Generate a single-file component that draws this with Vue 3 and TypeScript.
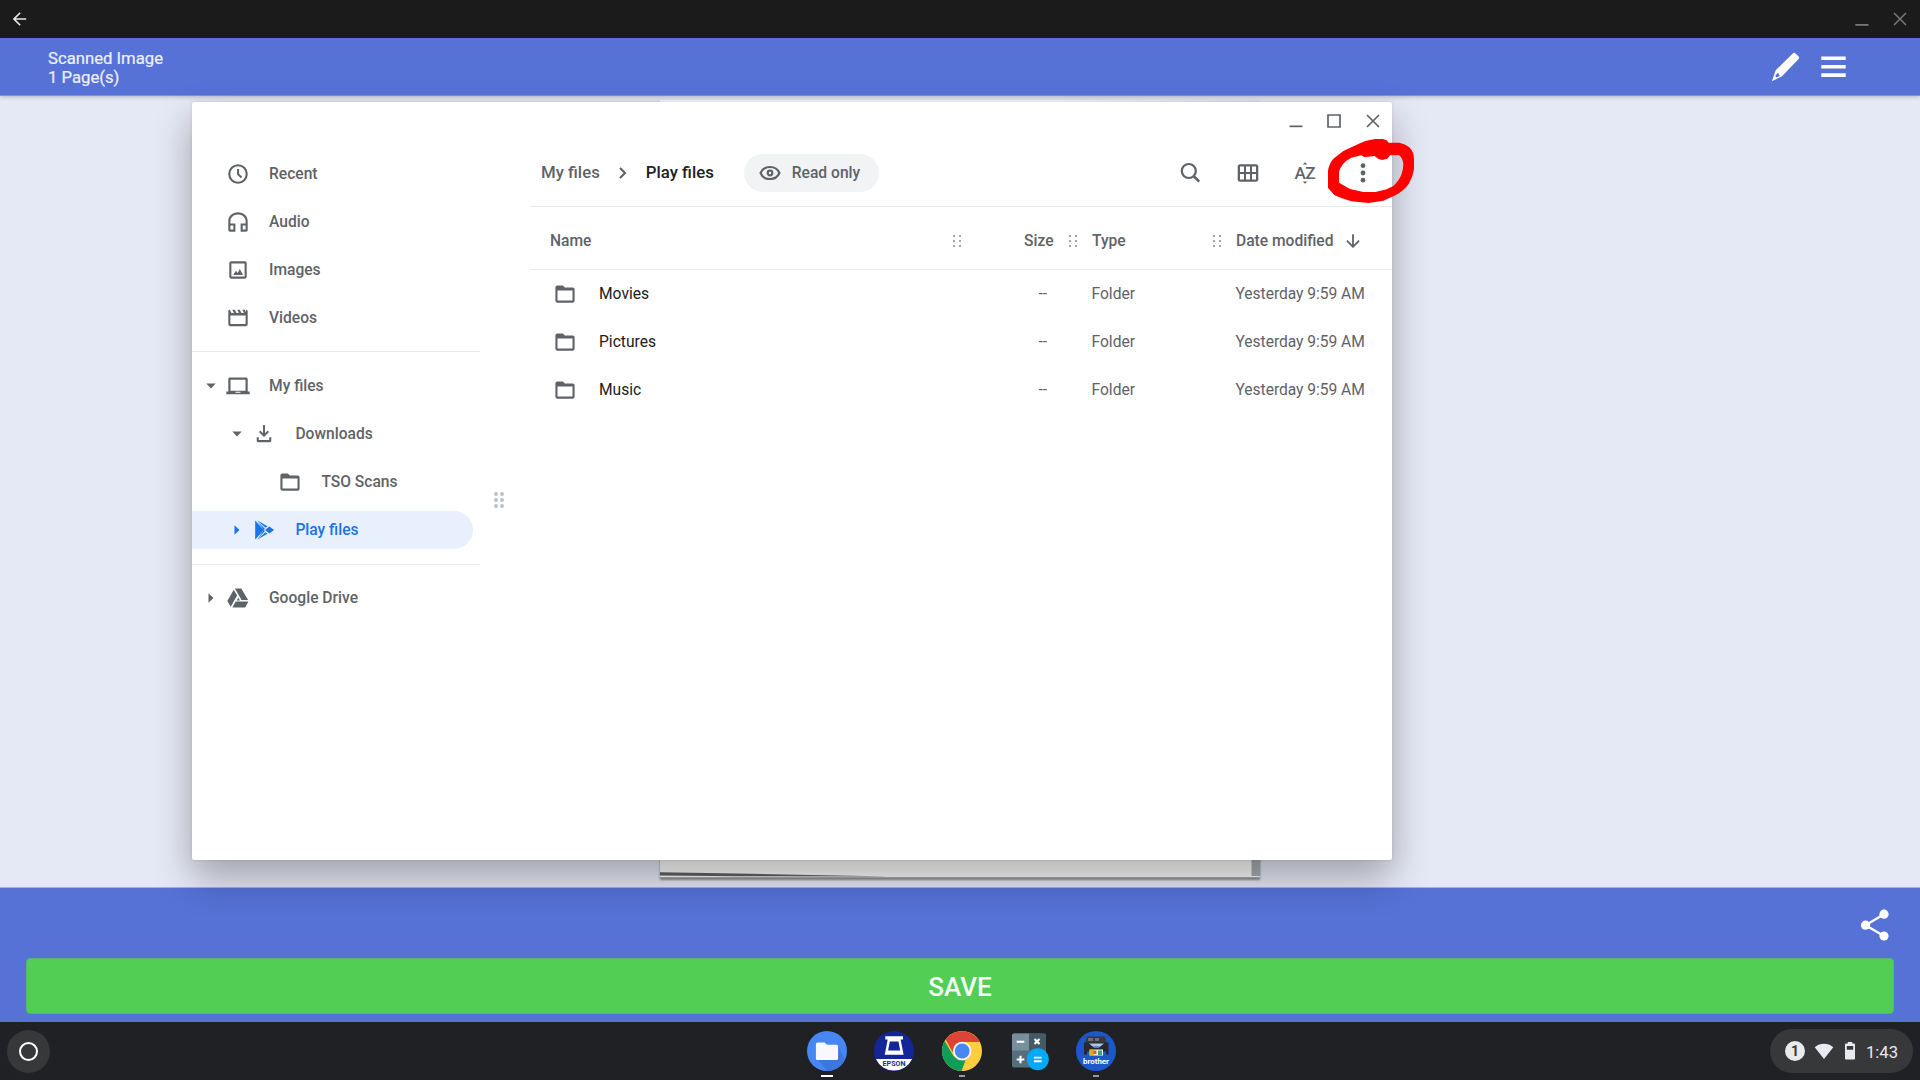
<script setup lang="ts">
interface NavItem {
  label: string
  icon: string
  level: number
  arrow?: 'down' | 'right'
  active?: boolean
}

const navGroups: NavItem[][] = [
  [
    { label: 'Recent', icon: 'clock', level: 0 },
    { label: 'Audio', icon: 'audio', level: 0 },
    { label: 'Images', icon: 'image', level: 0 },
    { label: 'Videos', icon: 'video', level: 0 },
  ],
  [
    { label: 'My files', icon: 'laptop', level: 0, arrow: 'down' },
    { label: 'Downloads', icon: 'download', level: 1, arrow: 'down' },
    { label: 'TSO Scans', icon: 'folder', level: 2 },
    { label: 'Play files', icon: 'play', level: 1, arrow: 'right', active: true },
  ],
  [{ label: 'Google Drive', icon: 'drive', level: 0, arrow: 'right' }],
]

const icons: Record<string, string> = {
  clock:
    'M12 2.2a9.8 9.8 0 1 0 0 19.6 9.8 9.8 0 0 0 0-19.6zm0 2.1a7.7 7.7 0 1 1 0 15.4 7.7 7.7 0 0 1 0-15.4zM11 7v5.6l3.8 3.6 1.3-1.5-3-2.9V7z',
  audio:
    'M2.3 20V11.2C2.3 6 6.500 2.300 12 2.300s9.700 3.700 9.700 8.900V20c0 1-.8 1.700-1.700 1.700h-5.400v-8.300h5V11.200c0-4-3.200-6.800-7.600-6.800s-7.600 2.800-7.600 6.800v2.200h5v8.300H4c-.9 0-1.700-.7-1.700-1.700zm2.100-4.500v4h2.900v-4zm12.300 0v4h2.900v-4z',
  image:
    'M5.200 3.300h13.600c1 0 1.900.9 1.900 1.900v13.600c0 1-.9 1.900-1.900 1.900H5.200c-1 0-1.900-.9-1.900-1.900V5.200c0-1 .9-1.900 1.900-1.900zm.2 2.100v13.200h13.200V5.400zM7.200 17l2.700-4.300 1.900 2.200 2-3.800L17 17z',
  video:
    'M2.300 5.200c0-1 .6-1.500 1.500-1.500L5.400 7h2.500L6.300 3.700h2.500L10.400 7h2.500l-1.600-3.300h2.500L15.400 7h2.500l-1.600-3.300h2.500L20 6.200V3.700c1 0 1.700.6 1.700 1.500v13.100c0 1-.8 1.900-1.900 1.900H4.200c-1 0-1.900-.9-1.900-1.900zm2.100 4.200v8.700h15.200V9.400z',
  laptop:
    'M3.900 3.600h16.200c.9 0 1.600.7 1.600 1.600v12.400h2v2.600H.3v-2.600h2V5.200c0-.9.7-1.600 1.600-1.600zm.6 2.100v11h15v-11zM9.500 17.700v1h5v-1z',
  download:
    'M11 3h2v8.200l2.600-2.600L17 10l-5 5-5-5 1.400-1.400 2.600 2.600zM4.700 15.200h2.100v2.900h10.400v-2.900h2.100v3.200c0 1-.8 1.800-1.800 1.800h-11c-1 0-1.800-.8-1.800-1.800z',
  folder:
    'M4.300 3.400h5.500l2.200 2h7.700c1.100 0 1.900.8 1.900 1.900v11.500c0 1.100-.8 1.900-1.900 1.900H4.300c-1.100 0-1.900-.8-1.900-1.900V5.300c0-1.100.8-1.900 1.900-1.900zm.2 5v10.200h15V8.400z',
  play:
    'M3.200 2.600v18.800l8.700-9.400zM4.600 2l9 7.800 1.900-1.600zM4.600 22l9-7.800 1.900 1.600zM13 12l4.400-3.500 4.600 3.500-4.600 3.500zM5.700 3.600l7.200 7.200-1 1.200zM5.700 20.400l7.200-7.200-1-1.200z',
  drive:
    'M8.900 2.600h6.400l6.800 11.500h-6.500zM7.800 3.800l3.300 5.700-6.400 11.300-3.400-5.800zM9.700 15.600h12.700L19.200 21.400H6.400zM12.300 11.700l1.700 2.800h-3.300z',
}

const files: string[] = ['Movies', 'Pictures', 'Music']
const dots = [0, 1, 2, 3, 4, 5]
</script>

<template>
  <div class="screen">
    <header class="titlebar">
      <svg width="14" height="14" viewBox="0 0 14 14" fill="none" stroke="#e8e8e8" stroke-width="1.6">
        <path d="M13.200 7H1M7.200.8L1 7l6.200 6.200" />
      </svg>
      <span class="grow"></span>
      <svg class="tb-min" width="14" height="14" viewBox="0 0 14 14"><path d="M.3 12h13.200v1.800H.3z" fill="#777" /></svg>
      <svg width="14" height="14" viewBox="0 0 14 14" fill="none" stroke="#777" stroke-width="1.5">
        <path d="M1 1l12 12M13 1L1 13" />
      </svg>
    </header>

    <div class="appbar">
      <div class="doc">
        <div>Scanned Image</div>
        <div>1 Page(s)</div>
      </div>
      <span class="grow"></span>
      <svg class="pencil" width="30" height="30" viewBox="0 0 30 30">
        <path fill="#fff" d="M22 1.300c.8-.7 1.600-.7 2.300 0l3.300 3.300c.7.700.7 1.500 0 2.300L11 24.200.9 29.200l3.900-11.100z" />
        <path fill="#5672d7" d="M6.200 21.300l1.500.3.3 1.500 1.300.5-3.700 1.900-1.400-1.400z" />
      </svg>
      <svg width="25" height="22" viewBox="0 0 25 22">
        <path fill="#fff" d="M.3.500h24.400v3.600H.3zM.3 8.900h24.400v3.600H.3zM.3 17.300h24.400v3.600H.3z" />
      </svg>
    </div>

    <main class="stage">
      <div class="sheet">
        <svg width="600" height="18" viewBox="0 0 600 18">
          <path d="M0 13.300l78 1.200L150 16l82 1.600L78 17.200 0 16.500z" fill="#2d2d2d" opacity=".75" />
          <path d="M591.500 0h8.500v17h-8.500z" fill="#a9acb1" />
        </svg>
      </div>
    </main>

    <footer class="actions">
      <div class="share-row">
        <svg width="30" height="34" viewBox="0 0 30 34">
          <path d="M24 6.200L5.500 17.300 24 28" fill="none" stroke="#fff" stroke-width="2.300" />
          <g fill="#fff"><circle cx="24" cy="6.200" r="4.600" /><circle cx="5.500" cy="17.200" r="4.600" /><circle cx="24" cy="28" r="4.600" /></g>
        </svg>
      </div>
      <button class="save">SAVE</button>
    </footer>

    <nav class="shelf">
      <div class="launcher"><i></i></div>
      <div class="apps">
        <div class="app">
          <svg width="42" height="42" viewBox="0 0 42 42">
            <circle cx="21" cy="21" r="20" fill="#4687f4" />
            <path d="M10 28l11.500 12.900A20 20 0 0 0 39 29.500L32 16z" fill="#3b77dc" />
            <path d="M11.500 12.500h7l2.500 2.300h9.500a1.600 1.600 0 0 1 1.600 1.600v12a1.600 1.600 0 0 1-1.600 1.600h-19a1.600 1.600 0 0 1-1.600-1.600v-14.300a1.600 1.600 0 0 1 1.600-1.600z" fill="#f7f9fe" />
          </svg>
          <b class="run focus"></b>
        </div>
        <div class="app">
          <svg width="42" height="42" viewBox="0 0 42 42">
            <circle cx="21" cy="21" r="20" fill="#14259a" />
            <path d="M2.900 29a20 20 0 0 0 36.200 0z" fill="#fff" />
            <path d="M12.300 6.300h17.700v3.200h-2.400l3 15.300H11.700l3-15.300h-2.400zM16.800 11.400l-1.700 9h12.100l-1.700-9z" fill="#fff" fill-rule="evenodd" />
            <text x="21" y="35.900" text-anchor="middle" textLength="23" lengthAdjust="spacingAndGlyphs" class="epson">EPSON</text>
          </svg>
        </div>
        <div class="app">
          <svg width="42" height="42" viewBox="0 0 42 42">
            <circle cx="21" cy="21" r="20" fill="#ffcd40" />
            <path d="M3.700 11l8.800 15 4.800 4.100 3.700.2 6.800-3L20.500 41A20 20 0 0 1 3.700 11z" fill="#0f9d58" />
            <path d="M21 30.200l8.900-4.700L20.500 41l4-10.700z" fill="#ffcd40" />
            <path d="M4.600 9.600A20 20 0 0 1 38.700 12H21a9 9 0 0 0-8.600 6.500L11.500 22z" fill="#db4437" />
            <circle cx="21.200" cy="21" r="9.200" fill="#f4f4f4" />
            <circle cx="21.200" cy="21" r="7.400" fill="#4687f4" />
          </svg>
          <b class="run"></b>
        </div>
        <div class="app">
          <svg width="42" height="42" viewBox="0 0 42 42">
            <rect x="4" y="3.500" width="34" height="34" rx="2" fill="#546e7a" />
            <path d="M6 3.500h15v17H4v-15a2 2 0 0 1 2-2z" fill="#78909c" />
            <path d="M21 3.500h15a2 2 0 0 1 2 2v15H21z" fill="#455a64" />
            <path d="M8.700 11.700h7.600M26.500 9l5 5M31.500 9l-5 5M8.700 29.500h7.600M12.500 25.700v7.600" stroke="#fff" stroke-width="2.100" />
            <circle cx="29.800" cy="29.200" r="11" fill="#03a9f4" />
            <path d="M26 27.600h7.600M26 31.300h7.600" stroke="#fff" stroke-width="1.900" />
          </svg>
        </div>
        <div class="app">
          <svg width="42" height="42" viewBox="0 0 42 42">
            <circle cx="21" cy="21" r="20" fill="#1c57cc" />
            <path d="M12 6.500h18l2 7H10z" fill="#38393d" />
            <path d="M13 8h5v3h-5zM20 8h4v3h-4z" fill="#6c6e73" />
            <path d="M9 12.500h24.500v12H31v-3H12v3H9z" fill="#26282d" />
            <path d="M14 13.500h15L24 17.500h-5z" fill="#a9c9f3" />
            <path d="M18 16h7l-3.500 2z" fill="#4b86de" />
            <path d="M14.500 19.500h13.500v6H14.500z" fill="#f4f4ee" />
            <path d="M15 20h4v5h-4z" fill="#e2a91f" /><path d="M18.500 20.500h3V24h-3z" fill="#e2553c" /><path d="M23 20.500h4v4.500h-4z" fill="#31a57c" />
            <text x="21" y="34.300" text-anchor="middle" textLength="26" lengthAdjust="spacingAndGlyphs" class="brother">brother</text>
          </svg>
          <b class="run"></b>
        </div>
      </div>
      <div class="tray">
        <span class="count">1</span>
        <svg width="20" height="17" viewBox="0 0 20 17"><path d="M.7 4.200C6-.3 14-.3 19.300 4.200L10 16z" fill="#e8eaed" /></svg>
        <svg class="battery" width="10" height="18" viewBox="0 0 10 18">
          <path d="M2.800 0h4.400v1.600h1.600c.7 0 1.200.5 1.200 1.200v13.600c0 .7-.5 1.200-1.200 1.200H1.200C.5 17.600 0 17.100 0 16.400V2.800c0-.7.5-1.200 1.200-1.200h1.600zM1.800 4v3.800h6.400V4z" fill="#e8eaed" fill-rule="evenodd" />
        </svg>
        <span class="time">1:43</span>
      </div>
    </nav>

    <section class="window">
      <aside class="sidebar">
        <div v-for="(group, g) in navGroups" :key="g" class="group">
          <div v-for="item in group" :key="item.label" class="nav" :class="['lvl' + item.level, { active: item.active }]">
            <span class="twist">
              <svg v-if="item.arrow === 'down'" width="10" height="6" viewBox="0 0 10 6"><path d="M.3.500h9.400L5 5.500z" fill="currentColor" /></svg>
              <svg v-else-if="item.arrow === 'right'" width="6" height="10" viewBox="0 0 6 10"><path d="M.5.300v9.400L5.500 5z" fill="currentColor" /></svg>
            </span>
            <svg width="24" height="24" viewBox="0 0 24 24"><path :d="icons[item.icon]" fill="currentColor" fill-rule="evenodd" /></svg>
            <span class="label">{{ item.label }}</span>
          </div>
        </div>
      </aside>
      <div class="splitter">
        <div class="grip big"><i v-for="d in dots" :key="d"></i></div>
      </div>
      <div class="content">
        <div class="controls">
          <svg width="14" height="14" viewBox="0 0 14 14"><path d="M.5 11.500h13v1.700H.5z" fill="#5f6368" /></svg>
          <svg width="14" height="14" viewBox="0 0 14 14"><path d="M1 1h12v12H1z" fill="none" stroke="#5f6368" stroke-width="1.700" /></svg>
          <svg width="14" height="14" viewBox="0 0 14 14"><path d="M1 1l12 12M13 1L1 13" stroke="#5f6368" stroke-width="1.700" /></svg>
        </div>
        <div class="toolbar">
          <span class="crumb">My files</span>
          <svg class="chev" width="8" height="12" viewBox="0 0 8 12"><path d="M1 1l5 5-5 5" fill="none" stroke="#5f6368" stroke-width="2.100" /></svg>
          <span class="crumb current">Play files</span>
          <span class="chip">
            <svg width="22" height="16" viewBox="0 0 22 16" fill="none" stroke="#5f6368">
              <path d="M1.600 8C3.200 4.200 6.800 2 11 2s7.800 2.200 9.400 6c-1.600 3.800-5.200 6-9.400 6S3.200 11.800 1.600 8z" stroke-width="2.200" />
              <circle cx="11" cy="8" r="2.300" stroke-width="2.200" />
            </svg>
            Read only
          </span>
          <span class="grow"></span>
          <div class="tools">
            <svg width="24" height="24" viewBox="0 0 24 24" fill="none" stroke="#5f6368">
              <circle cx="10.800" cy="10" r="7" stroke-width="2.200" /><path d="M15.600 15l5.600 5.600" stroke-width="2.600" />
            </svg>
            <svg width="24" height="24" viewBox="0 0 24 24">
              <path d="M3.900 3.300h16.200c1.200 0 2.200 1 2.200 2.200v13c0 1.200-1 2.200-2.200 2.200H3.900c-1.200 0-2.200-1-2.200-2.200v-13c0-1.200 1-2.200 2.200-2.200zM4 5.600V11h4V5.600zM10 5.600V11h4V5.600zM16 5.600V11h4V5.600zM4 13v5.400h4V13zM10 13v5.400h4V13zM16 13v5.400h4V13z" fill="#5f6368" fill-rule="evenodd" />
            </svg>
            <svg width="24" height="24" viewBox="0 0 24 24" fill="#5f6368">
              <path d="M9.700 3.400L12 1.200l2.300 2.200zM9.700 20.600l2.300 2.200 2.300-2.200z" />
              <text x="12" y="18" text-anchor="middle" textLength="21" class="az">AZ</text>
            </svg>
            <svg width="24" height="24" viewBox="0 0 24 24" fill="#5f6368">
              <circle cx="12" cy="4.700" r="2.400" /><circle cx="12" cy="12" r="2.400" /><circle cx="12" cy="19.200" r="2.400" />
            </svg>
          </div>
        </div>
        <div class="thead">
          <span class="c-name">Name</span>
          <div class="grip"><i v-for="d in dots" :key="d"></i></div>
          <span class="c-size">Size</span>
          <div class="grip after-size"><i v-for="d in dots" :key="d"></i></div>
          <span class="c-type">Type</span>
          <div class="grip"><i v-for="d in dots" :key="d"></i></div>
          <span class="c-date">Date modified</span>
          <svg class="sort" width="14" height="14" viewBox="0 0 14 14"><path d="M7 .3v12.200M.9 6.700L7 12.800l6.100-6.100" fill="none" stroke="#5f6368" stroke-width="1.800" /></svg>
        </div>
        <div v-for="f in files" :key="f" class="file">
          <svg width="24" height="24" viewBox="0 0 24 24"><path :d="icons.folder" fill="#5f6368" fill-rule="evenodd" /></svg>
          <span class="f-name">{{ f }}</span>
          <span class="f-size">--</span>
          <span class="f-type">Folder</span>
          <span class="f-date">Yesterday 9:59 AM</span>
        </div>
      </div>
    </section>

    <svg class="marker" width="86" height="64" viewBox="594 147 258 192">
      <path
        fill="#f00"
        fill-rule="evenodd"
        d="M594 242Q597 222 610 206L640 183L664 172L690 160L706 153L735 147H758L770 151L776 158H808Q826 161 838 172Q852 186 852 208V238Q848 262 836 282Q820 304 796 316L760 332L715 339L664 334L634 324L614 316L594 294ZM627 246V278L660 297L700 306H736L770 298L790 288Q808 270 814 254Q820 238 820 222Q818 202 806 195L780 196L772 206L756 210L744 206L734 198L716 200L702 201L694 196L664 203Q634 218 627 246Z"
      />
    </svg>
  </div>
</template>

<style>
body {
  margin: 0;
  overflow: hidden;
}
</style>

<style scoped>
* {
  box-sizing: border-box;
}
svg {
  display: block;
  flex: none;
}
.screen {
  position: relative;
  width: 1920px;
  height: 1080px;
  display: flex;
  flex-direction: column;
  font-family: Roboto, 'Liberation Sans', sans-serif;
  overflow: hidden;
  background: #e5e8f5;
}
.grow {
  flex: 1;
}
.titlebar {
  height: 38px;
  flex: none;
  background: #1b1b1b;
  display: flex;
  align-items: center;
  padding: 0 13px 0 12.500px;
}
.tb-min {
  margin-right: 24px;
}
.appbar {
  height: 58px;
  flex: none;
  background: #5672d7;
  border-bottom: 1px solid #7b90df;
  box-shadow: 0 1px 4px rgba(0, 0, 0, 0.22);
  display: flex;
  align-items: center;
  padding: 0 74px 0 48px;
  position: relative;
}
.doc {
  color: #edf0fc;
  font-size: 16.700px;
  line-height: 19px;
  padding-top: 2px;
  -webkit-text-stroke: 0.2px #edf0fc;
}
.pencil {
  margin-right: 20px;
}
.stage {
  flex: none;
  height: 791px;
  padding: 4px 0 8px 660px;
}
.sheet {
  width: 600px;
  height: 778px;
  background: linear-gradient(90deg, #fbfbfb 0, #fbfbfb 400px, #dde3ec 600px);
  background-size: 100% 3px;
  background-repeat: no-repeat;
  background-color: #fbfbfb;
  border-bottom: 1px solid #aaa;
  box-shadow: 0 2px 2px rgba(0, 0, 0, 0.4);
  display: flex;
  align-items: flex-end;
}
.actions {
  flex: none;
  height: 135px;
  background: #5672d7;
  border-top: 1px solid #a3afe2;
  padding: 0 26px;
}
.share-row {
  height: 70px;
  display: flex;
  justify-content: flex-end;
  padding: 20px 4.500px 0 0;
}
.save {
  display: block;
  width: 100%;
  height: 56px;
  border: 1px solid #54b471;
  border-radius: 4px;
  background: #52ce54;
  color: #f4fcf4;
  font: 500 26px Roboto, sans-serif;
  padding: 2px 0 0;
}
.shelf {
  flex: none;
  height: 58px;
  background: #202124;
  display: flex;
  align-items: center;
  justify-content: space-between;
  padding: 0 7px;
}
.launcher {
  width: 43px;
  height: 43px;
  border-radius: 50%;
  background: #37383a;
  display: flex;
  align-items: center;
  justify-content: center;
  margin-right: 756px;
}
.launcher i {
  width: 19px;
  height: 19px;
  border: 2px solid #fff;
  border-radius: 50%;
}
.apps {
  display: flex;
  gap: 25.300px;
  align-self: stretch;
  flex: 1;
}
.app {
  width: 42px;
  padding-top: 8px;
  display: flex;
  flex-direction: column;
  align-items: center;
}
.run {
  width: 6px;
  height: 2px;
  margin-top: 3px;
  background: #9a9a9c;
}
.run.focus {
  width: 12px;
  background: #fff;
}
.epson {
  font: 700 8px Roboto, sans-serif;
  fill: #1c2a94;
}
.brother {
  font: 700 8px Roboto, sans-serif;
  fill: #fff;
}
.tray {
  width: 143px;
  height: 44px;
  border-radius: 22px;
  background: #37383a;
  display: flex;
  align-items: center;
  padding-left: 15px;
  color: #e8eaed;
}
.count {
  width: 20px;
  height: 20px;
  border-radius: 50%;
  background: #e8eaed;
  color: #37383a;
  font-size: 14px;
  font-weight: 700;
  line-height: 20px;
  text-align: center;
  margin-right: 9px;
}
.battery {
  margin: 0 11px;
}
.time {
  font-size: 16.600px;
  line-height: 20px;
  padding-top: 3px;
}
.window {
  position: absolute;
  left: 192px;
  top: 102px;
  width: 1200px;
  height: 758px;
  background: #fff;
  border-radius: 2px;
  box-shadow: 0 18px 38px rgba(0, 0, 0, 0.3), 0 0 3px rgba(0, 0, 0, 0.12);
  display: flex;
  color: #5f6368;
}
.sidebar {
  width: 288px;
  padding-top: 48px;
}
.group {
  display: flow-root;
  padding-bottom: 9px;
}
.group + .group {
  border-top: 1px solid #e8eaed;
  padding-top: 10px;
  padding-bottom: 10px;
}
.group + .group + .group {
  padding-top: 9px;
}
.nav {
  height: 38px;
  margin: 5px 7px 5px 0;
  display: flex;
  align-items: center;
  padding-left: 7px;
  border-radius: 0 19px 19px 0;
  font-size: 15.600px;
  font-weight: 500;
}
.nav + .nav {
  margin-top: 10px;
}
.lvl1 {
  padding-left: 33.400px;
}
.lvl2 {
  padding-left: 59.400px;
}
.active {
  background: #e8f0fe;
  color: #1a73e8;
}
.twist {
  width: 24px;
  margin-right: 3px;
  display: flex;
  justify-content: center;
}
.label {
  margin-left: 19px;
}
.splitter {
  width: 50px;
  display: flex;
  justify-content: center;
  align-items: center;
  padding: 38px 12px 0 0;
}
.grip {
  display: grid;
  grid-template-columns: 2px 2px;
  gap: 3px 4px;
  width: 8px;
}
.grip i {
  width: 2px;
  height: 2px;
  background: #a3a6a9;
}
.grip.big {
  grid-template-columns: 4px 4px;
  gap: 2px;
  width: 10px;
}
.grip.big i {
  width: 4px;
  height: 4px;
  border-radius: 50%;
  background: #bdc1c6;
}
.content {
  flex: 1;
}
.controls {
  height: 38px;
  display: flex;
  justify-content: flex-end;
  align-items: center;
  gap: 24.700px;
  padding-right: 12px;
}
.toolbar {
  height: 67px;
  border-bottom: 1px solid #e8eaed;
  display: flex;
  align-items: center;
  padding: 0 17px 1px 11px;
}
.crumb {
  font-size: 16.800px;
  font-weight: 500;
  padding-bottom: 2px;
}
.chev {
  margin: 0 19px 0 19px;
}
.current {
  color: #202124;
}
.chip {
  height: 38px;
  width: 135px;
  margin-left: 30px;
  padding-left: 15px;
  border-radius: 19px;
  background: #f1f3f4;
  display: flex;
  align-items: center;
  gap: 11px;
  font-size: 15.600px;
  font-weight: 500;
  white-space: nowrap;
}
.tools {
  display: flex;
  gap: 33.600px;
}
.az {
  font: 500 17px Roboto, sans-serif;
}
.thead {
  height: 63px;
  border-bottom: 1px solid #e8eaed;
  display: flex;
  align-items: center;
  padding: 6px 0 0 20px;
  font-size: 15.600px;
  font-weight: 500;
}
.c-name {
  width: 402.500px;
}
.c-size {
  width: 93px;
  text-align: right;
}
.after-size {
  margin-left: 15.500px;
}
.c-type {
  margin-left: 15px;
  width: 121px;
}
.c-date {
  margin-left: 15px;
}
.sort {
  margin-left: 12.500px;
}
.file {
  height: 48px;
  display: flex;
  align-items: center;
  padding-left: 23px;
  font-size: 15.600px;
}
.f-name {
  margin-left: 22px;
  width: 362px;
  color: #202124;
}
.f-size {
  width: 86px;
  text-align: right;
}
.f-type {
  margin-left: 44.500px;
  width: 144px;
}
.f-date {
  letter-spacing: -0.03px;
}
.marker {
  position: absolute;
  left: 1328px;
  top: 139px;
}
</style>
